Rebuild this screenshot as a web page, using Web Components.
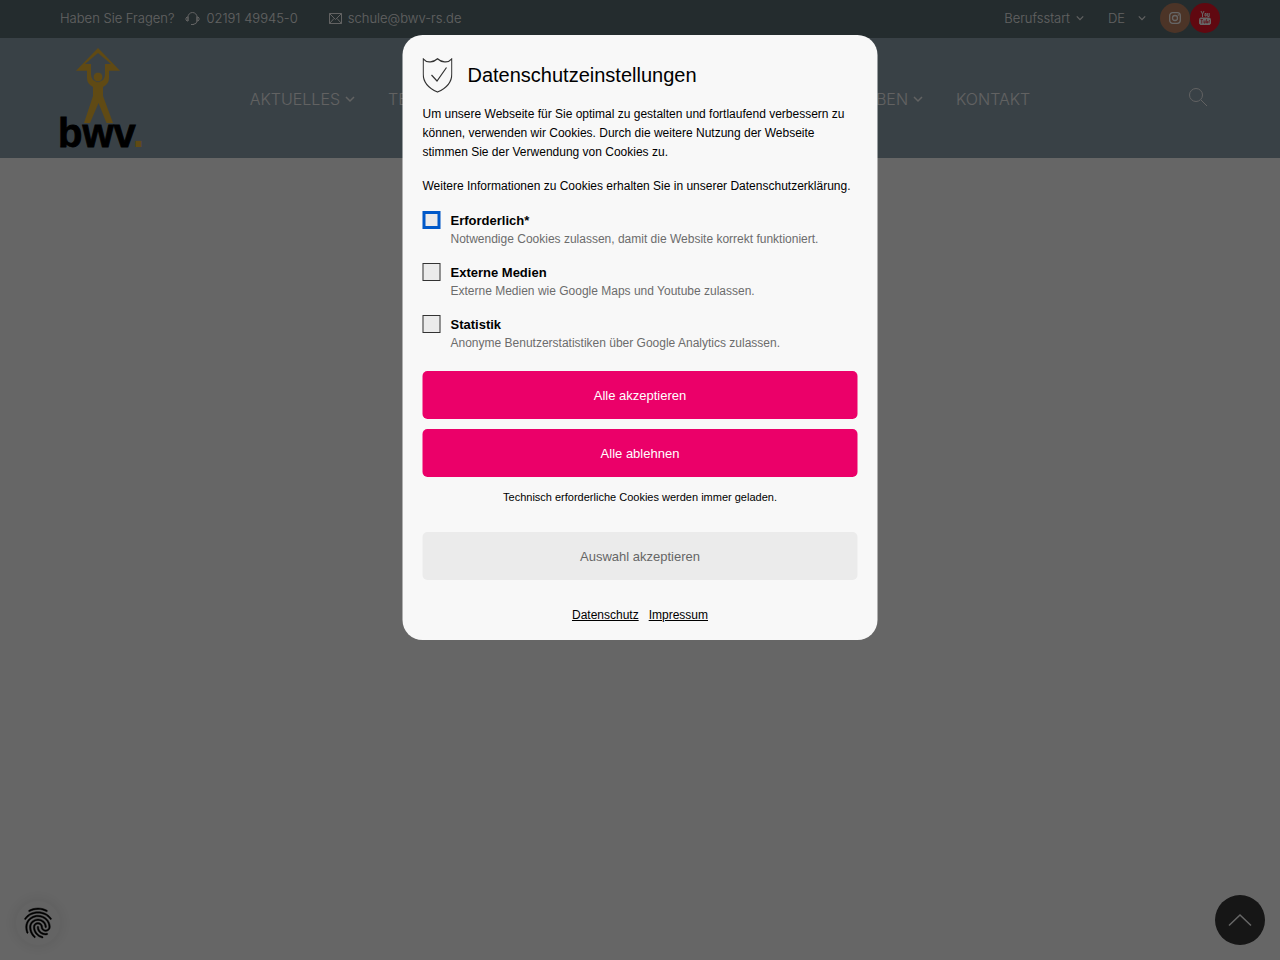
<!DOCTYPE html>
<html lang="de">
<head>
<meta charset="utf-8">
<title>BWV Remscheid</title>
<style>
body {
    margin: 0;
    min-height: 100vh;
    background-color: #fff;
    font-family: Inter, "Liberation Sans", sans-serif;
    font-weight: 300;
}
</style>
</head>
<body>

<top-bar></top-bar>
<site-header>
    <nav-item menu>AKTUELLES</nav-item>
    <nav-item menu>TERMINE</nav-item>
    <nav-item menu>BILDUNGSGÄNGE</nav-item>
    <nav-item menu>SCHULE</nav-item>
    <nav-item menu>SCHULLEBEN</nav-item>
    <nav-item>KONTAKT</nav-item>
</site-header>
<corner-buttons></corner-buttons>

<cookie-dialog>
    <cookie-option name="required" label="Erforderlich*" active>Notwendige Cookies zulassen, damit die Website korrekt funktioniert.</cookie-option>
    <cookie-option name="media" label="Externe Medien">Externe Medien wie Google Maps und Youtube zulassen.</cookie-option>
    <cookie-option name="stats" label="Statistik">Anonyme Benutzerstatistiken über Google Analytics zulassen.</cookie-option>
</cookie-dialog>

<script>
const chevron = `<svg class="chevron" viewBox="0 0 10 10" fill="none" stroke="currentColor" stroke-width="1.5"><path d="M1 3l4 4 4-4"/></svg>`;

function attach(element, html){
    const template = document.createElement("template");
    template.innerHTML = html;
    element.attachShadow({mode:"open"});
    element.shadowRoot.appendChild(template.content.cloneNode(true));
}

class TopBar extends HTMLElement {
    constructor(){
        super();
        attach(this, `
<style>
:host {
    display: flex;
    justify-content: space-between;
    align-items: center;
    height: 36px;
    padding: 0 60px 2px;
    background-color: #5a6e73;
    color: #f4f4f4;
    font-size: 13px;
}

div, a {
    display: flex;
    align-items: center;
}

a {
    color: inherit;
    text-decoration: none;
    gap: 6px;
}

.left { gap: 11px; }
.left a + a { margin-left: 20px; }
.right { gap: 24px; }
.lang { gap: 12px; }
.social { margin-left: -10px; }

.social a {
    justify-content: center;
    width: 30px;
    height: 30px;
    border-radius: 50%;
    background-color: #be8262;
}

.social a.youtube { background-color: #f01428; }

select {
    appearance: none;
    border: none;
    padding: 0;
    background: none;
    color: inherit;
    font: inherit;
}

.chevron { width: 8px; height: 8px; }
</style>
<div class="left">
    <span>Haben Sie Fragen?</span>
    <a href="tel:+492191499450">
        <svg width="15" height="15" viewBox="0 0 15 15" fill="none" stroke="currentColor"><path d="M3 10V6a4.500 4.500 0 0 1 9 0v4M3 6H2L1 7v2l1 1h1zM12 6h1l1 1v2l-1 1h-1zM12 10q0 3-4 3.500M6 13.500h3"/></svg>
        02191 49945-0
    </a>
    <a href="mailto:schule@bwv-rs.de">
        <svg width="13" height="13" viewBox="0 0 13 13" fill="none" stroke="currentColor"><path d="M.5 1.500h12v10H.5zM.5 1.500l6 6 6-6M.5 11.500l4.500-5M12.500 11.500L8 6.500"/></svg>
        schule@bwv-rs.de
    </a>
</div>
<div class="right">
    <a href="#berufsstart">Berufsstart ${chevron}</a>
    <div class="lang"><select aria-label="Sprache"><option>DE</option></select>${chevron}</div>
    <div class="social">
        <a href="#instagram" aria-label="Instagram"><svg width="12" height="12" viewBox="0 0 12 12" fill="none" stroke="#fff" stroke-width="1.300"><rect x=".7" y=".7" width="10.600" height="10.600" rx="3"/><circle cx="6" cy="6" r="2.500"/><path d="M8.800 3h1"/></svg></a>
        <a href="#youtube" class="youtube" aria-label="YouTube"><svg width="12" height="14" viewBox="0 0 12 14" fill="none" stroke="#fff"><path d="M2 0l1.500 3v3M5 0L3.500 3M6 2.500v2.500h1.200V2.500H6M8.700 2v3.500h1.500V2"/><rect x=".5" y="7" width="11" height="6.500" rx="1.500" fill="#fff"/><path d="M1.500 8.500h2.500M2.700 8.500v4M5 9.500v2.500h1.200V9.500M7.600 8v4h1V10M10 12V9.700h1" stroke="#f01428" stroke-width=".7"/></svg></a>
    </div>
</div>
`);
    }
}

class NavItem extends HTMLElement {
    connectedCallback(){
        attach(this, `
<style>
:host { display: block; }

a {
    display: flex;
    align-items: center;
    gap: 5px;
    color: inherit;
    text-decoration: none;
}

.chevron { width: 10px; height: 10px; }
</style>
<a href="#"><slot></slot>${this.hasAttribute("menu") ? chevron : ""}</a>
`);
    }
}

class SiteHeader extends HTMLElement {
    constructor(){
        super();
        attach(this, `
<style>
:host {
    display: grid;
    grid-template-columns: 1fr auto 1fr;
    align-items: center;
    height: 120px;
    padding: 0 60px;
    background-color: #8ea3b0;
    color: #f4f4f4;
    font-size: 16px;
}

nav {
    display: flex;
    gap: 33px;
    padding-top: 2px;
}

.logo { width: 84px; height: 100px; }
.logo svg { display: block; overflow: visible; }

button {
    justify-self: end;
    margin-right: 12px;
    padding: 0;
    border: none;
    background: none;
    color: inherit;
}
</style>
<a class="logo" href="#" aria-label="Startseite">
    <svg width="84" height="100" viewBox="0 0 84 100">
        <path fill="#f0b832" fill-rule="evenodd" d="M38 0L60 22.700H49V30Q49 36 43 39V48L53 75H46.500L38.500 55 30 75H24L33 48V39Q27 36 27 30V22.700H16zM38 5L25 16H31V26Q31 33.500 38 33.500T45 26V16H51z"/>
        <circle cx="38" cy="29" r="4.800" fill="#f0b832" stroke="#8ea3b0" stroke-width=".8"/>
        <text x="-2" y="99" font-family="Liberation Sans" font-weight="700" font-size="40" stroke="#000" stroke-width=".8">bwv<tspan fill="#f0b832" stroke="none">.</tspan></text>
    </svg>
</a>
<nav><slot></slot></nav>
<button aria-label="Suche"><svg width="20" height="20" viewBox="0 0 20 20" fill="none" stroke="currentColor"><circle cx="8" cy="8" r="6.500"/><path d="M13 13l6 6"/></svg></button>
`);
    }
}

class CornerButtons extends HTMLElement {
    constructor(){
        super();
        attach(this, `
<style>
:host {
    position: fixed;
    right: 15px;
    bottom: 15px;
    left: 16px;
    display: flex;
    justify-content: space-between;
    align-items: flex-end;
}

button {
    display: flex;
    justify-content: center;
    align-items: center;
    width: 44px;
    height: 44px;
    padding: 0;
    border: none;
    border-radius: 50%;
    background-color: #fafafa;
    box-shadow: 0 0 15px rgba(0, 0, 0, 0.11);
}

.top {
    width: 50px;
    height: 50px;
    background-color: #373737;
    box-shadow: none;
}
</style>
<button aria-label="Cookie-Einstellungen">
    <svg width="36" height="36" viewBox="0 0 24 24" stroke="#000" stroke-width=".3"><path d="M17.810 4.470c-.08 0-.16-.02-.23-.06C15.660 3.420 14 3 12.010 3c-1.980 0-3.860.47-5.570 1.410-.24.13-.54.04-.68-.2-.13-.24-.04-.55.2-.68C7.820 2.520 9.860 2 12.010 2c2.130 0 3.990.47 6.030 1.520.25.13.34.43.21.67-.09.18-.26.28-.44.28zM3.500 9.720c-.1 0-.2-.03-.29-.09-.23-.16-.28-.47-.12-.7.99-1.400 2.250-2.500 3.750-3.270C9.980 4.040 14 4.030 17.150 5.650c1.500.77 2.760 1.860 3.750 3.250.16.22.11.54-.12.7-.23.16-.54.11-.7-.12-.9-1.260-2.040-2.250-3.390-2.940-2.870-1.470-6.540-1.470-9.400.01-1.360.7-2.500 1.700-3.400 2.960-.08.14-.23.21-.39.21zm6.250 12.070c-.13 0-.26-.05-.35-.15-.87-.87-1.340-1.430-2.010-2.640-.69-1.230-1.050-2.730-1.050-4.340 0-2.970 2.540-5.390 5.660-5.390s5.660 2.420 5.660 5.390c0 .28-.22.5-.5.5s-.5-.22-.5-.5c0-2.420-2.090-4.390-4.660-4.390-2.570 0-4.660 1.970-4.660 4.390 0 1.440.32 2.770.93 3.850.64 1.150 1.080 1.640 1.850 2.420.19.2.19.51 0 .71-.11.1-.24.15-.37.15zm7.170-1.850c-1.190 0-2.240-.3-3.100-.89-1.490-1.010-2.380-2.650-2.380-4.390 0-.28.22-.5.5-.5s.5.22.5.5c0 1.410.72 2.740 1.940 3.560.71.48 1.540.71 2.540.71.24 0 .64-.03 1.040-.1.27-.05.53.13.58.41.05.27-.13.53-.41.58-.57.11-1.070.12-1.210.12zM14.910 22c-.04 0-.09-.01-.13-.02-1.590-.44-2.630-1.030-3.720-2.100-1.400-1.390-2.170-3.240-2.170-5.220 0-1.620 1.380-2.940 3.080-2.940 1.700 0 3.080 1.320 3.080 2.940 0 1.070.93 1.940 2.080 1.940s2.080-.87 2.080-1.940c0-3.770-3.250-6.830-7.250-6.830-2.840 0-5.440 1.580-6.610 4.030-.39.81-.59 1.760-.59 2.800 0 .78.07 2.010.67 3.610.1.26-.03.55-.29.64-.26.1-.55-.04-.64-.29-.49-1.310-.73-2.610-.73-3.960 0-1.200.23-2.290.68-3.240 1.330-2.790 4.280-4.600 7.510-4.600 4.550 0 8.250 3.510 8.250 7.830 0 1.620-1.380 2.940-3.080 2.940s-3.080-1.320-3.080-2.940c0-1.070-.93-1.940-2.080-1.940s-2.080.87-2.080 1.940c0 1.710.66 3.310 1.870 4.510.95.94 1.860 1.460 3.270 1.850.27.07.42.35.35.61-.05.23-.26.38-.47.38z"/></svg>
</button>
<button class="top" aria-label="Nach oben">
    <svg width="24" height="14" viewBox="0 0 24 14" fill="none" stroke="#fff" stroke-width="1.500"><path d="M1 12.500L12 2l11 10.500"/></svg>
</button>
`);
    }
}

class CookieOption extends HTMLElement {
    connectedCallback(){
        attach(this, `
<style>
:host { display: block; }

label {
    display: grid;
    grid-template-columns: 18px 1fr;
    column-gap: 10px;
    line-height: 19px;
}

input {
    appearance: none;
    box-sizing: border-box;
    width: 18px;
    height: 18px;
    margin: 0;
    border: 1px solid #333;
    background-color: #ebebeb;
}

:host([active]) input { border: 3px solid #0059c9; }

b {
    font-size: 13px;
    font-weight: 700;
}

span {
    grid-column: 2;
    color: #6c6c6c;
}
</style>
<label><input type="checkbox" name="${this.getAttribute("name")}"><b>${this.getAttribute("label")}</b><span><slot></slot></span></label>
`);
    }
}

class CookieDialog extends HTMLElement {
    constructor(){
        super();
        attach(this, `
<style>
:host {
    position: fixed;
    inset: 0;
    background-color: rgba(0, 0, 0, 0.6);
    color: #000;
    font-family: "Liberation Sans", Arial, sans-serif;
    font-size: 12px;
    font-weight: 400;
    line-height: 19px;
}

section {
    position: absolute;
    top: 35px;
    left: 50%;
    transform: translateX(-50%);
    box-sizing: border-box;
    width: 475px;
    padding: 23px 20px 15px;
    border-radius: 20px;
    background-color: #f8f8f8;
}

header {
    display: flex;
    align-items: center;
    gap: 15px;
    margin-bottom: 12px;
}

h1 {
    margin: 0;
    font-size: 20px;
    font-weight: 400;
}

p { margin: 0 0 15px; }

.options {
    display: grid;
    gap: 14px;
    margin-bottom: 18px;
}

button {
    display: block;
    width: 100%;
    height: 48px;
    margin-bottom: 10px;
    border: none;
    border-radius: 5px;
    background-color: #eb0069;
    color: #fff;
    font-family: inherit;
    font-size: 13px;
}

.note {
    margin-bottom: 25px;
    text-align: center;
    font-size: 11px;
    line-height: 20px;
}

.save {
    margin-bottom: 26px;
    background-color: #ebebeb;
    color: #666;
}

footer {
    display: flex;
    justify-content: center;
    gap: 10px;
}

a { color: inherit; }
</style>
<section role="dialog" aria-labelledby="title">
    <header>
        <svg width="30" height="35" viewBox="0 0 30 35" fill="none" stroke="#333" stroke-width="1.200"><path d="M.7.8Q4 4.500 8 3.800 12 3.700 15 .8 18 3.700 22 3.800 26 4.500 29.300.8V16Q29.300 28 15 34 .7 28 .7 16zM9 17l5.500 6L24 9.500"/></svg>
        <h1 id="title">Datenschutzeinstellungen</h1>
    </header>
    <p>Um unsere Webseite für Sie optimal zu gestalten und fortlaufend verbessern zu können, verwenden wir Cookies. Durch die weitere Nutzung der Webseite stimmen Sie der Verwendung von Cookies zu.</p>
    <p>Weitere Informationen zu Cookies erhalten Sie in unserer Datenschutzerklärung.</p>
    <div class="options"><slot></slot></div>
    <button>Alle akzeptieren</button>
    <button>Alle ablehnen</button>
    <p class="note">Technisch erforderliche Cookies werden immer geladen.</p>
    <button class="save">Auswahl akzeptieren</button>
    <footer><a href="#datenschutz">Datenschutz</a><a href="#impressum">Impressum</a></footer>
</section>
`);
    }
}

customElements.define("top-bar", TopBar);
customElements.define("nav-item", NavItem);
customElements.define("site-header", SiteHeader);
customElements.define("corner-buttons", CornerButtons);
customElements.define("cookie-option", CookieOption);
customElements.define("cookie-dialog", CookieDialog);
</script>
</body>
</html>
